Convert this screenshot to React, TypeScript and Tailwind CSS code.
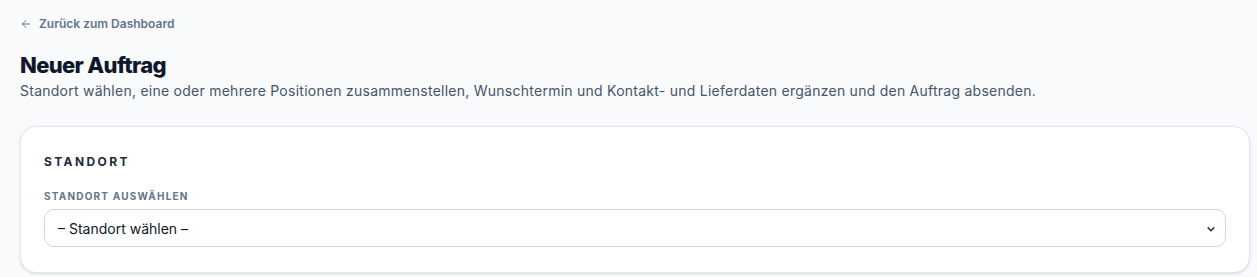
import React from "react";

export default function App() {
  return (
    <div className="min-h-screen w-full bg-[#f8fafc] font-['Inter',sans-serif]">
      <div className="pl-5 pt-[15px] w-[1250px]">
        <a className="flex items-center gap-[7px] text-[12px] font-semibold text-[#64748b] h-[18px]">
          <svg width="12" height="12" viewBox="0 0 24 24" fill="none" stroke="currentColor" strokeWidth="2" strokeLinecap="round" strokeLinejoin="round">
            <path d="M19 12H5" />
            <path d="M12 19l-7-7 7-7" />
          </svg>
          <span>Zurück zum Dashboard</span>
        </a>
        <h1 className="mt-[18px] text-[22px] leading-[28px] font-extrabold text-[#0f172a] tracking-[-0.03em]">Neuer Auftrag</h1>
        <p className="mt-[2px] text-[14px] leading-[20px] text-[#475569] tracking-[0.018em]">
          Standort wählen, eine oder mehrere Positionen zusammenstellen, Wunschtermin und Kontakt- und Lieferdaten ergänzen und den Auftrag absenden.
        </p>
        <div className="mt-[25px] w-[1230px] rounded-2xl border border-[#e2e8f0] bg-white shadow-sm px-[23px] pt-[26px] pb-[25px]">
          <h2 className="text-[12px] leading-[18px] font-bold tracking-[0.2em] text-[#1e293b]">STANDORT</h2>
          <label className="mt-[18px] block text-[10px] leading-[14px] font-bold tracking-[0.12em] text-[#64748b]">STANDORT AUSWÄHLEN</label>
          <div className="mt-[6px] relative h-[38px] rounded-[10px] border border-[#cbd5e1] bg-white flex items-center px-[13px] text-[14px] text-[#0f172a]">
            <span>– Standort wählen –</span>
            <svg className="absolute right-[9px] top-[14px]" width="10" height="10" viewBox="0 0 24 24" fill="none" stroke="#1e293b" strokeWidth="3.5" strokeLinecap="round" strokeLinejoin="round">
              <path d="M5 9l7 7 7-7" />
            </svg>
          </div>
        </div>
      </div>
    </div>
  );
}
